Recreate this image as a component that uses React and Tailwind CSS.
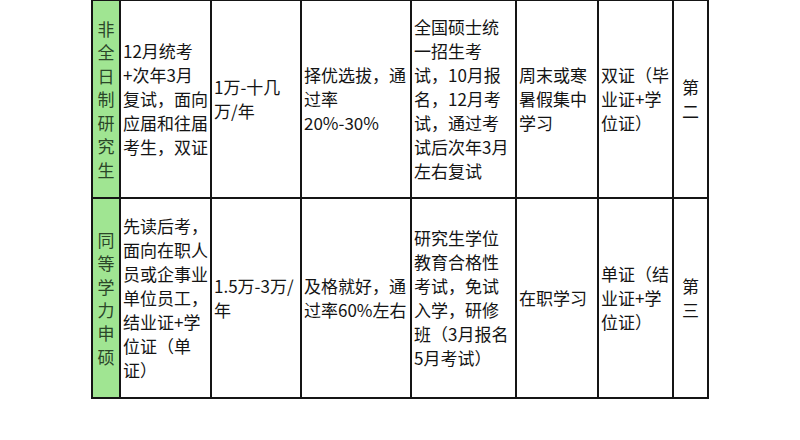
import React from 'react';

/**
 * 非全日制研究生 vs 同等学力申硕 comparison table (cropped)
 */
const rows = [
  {
    head: '非全日制研究生',
    cells: [
      ['12月统考', '+次年3月', '复试，面向', '应届和往届', '考生，双证'],
      ['1万-十几', '万/年'],
      ['择优选拔，通', '过率', '20%-30%'],
      ['全国硕士统', '一招生考', '试，10月报', '名，12月考', '试，通过考', '试后次年3月', '左右复试'],
      ['周末或寒', '暑假集中', '学习'],
      ['双证（毕', '业证+学', '位证）'],
    ],
    rank: ['第', '二'],
    height: 'h-[196px]',
  },
  {
    head: '同等学力申硕',
    cells: [
      ['先读后考，', '面向在职人', '员或企事业', '单位员工，', '结业证+学', '位证（单', '证）'],
      ['1.5万-3万/', '年'],
      ['及格就好，通', '过率60%左右'],
      ['研究生学位', '教育合格性', '考试，免试', '入学，研修', '班（3月报名', '5月考试）'],
      ['在职学习'],
      ['单证（结', '业证+学', '位证）'],
    ],
    rank: ['第', '三'],
    height: 'h-[198px]',
  },
];

function Cell({ lines }) {
  return (
    <div className="bg-white flex flex-col justify-center pl-[2px] text-[17px] leading-[24px] text-[#141414] whitespace-nowrap overflow-hidden">
      {lines.map((line, i) => (
        <span key={i}>{line}</span>
      ))}
    </div>
  );
}

export default function App() {
  return (
    <div
      className="w-[800px] h-[440px] bg-white overflow-hidden"
      style={{ fontFamily: '"Noto Sans CJK SC", "Noto Sans", sans-serif' }}
    >
      <div className="ml-[91px] w-[618px] bg-[#151515] pt-[1px] pb-[2px] px-[2px]">
        {rows.map((row, idx) => (
          <div
            key={row.head}
            className={`grid grid-cols-[26px_89px_88px_108px_103px_80px_73px_33px] gap-x-[2px] ${row.height} ${idx > 0 ? 'mt-[2px]' : ''}`}
          >
            {/* Category */}
            <div className="bg-[#a0e592] flex flex-col items-center justify-center text-[17px] leading-[23.4px] text-[#2b4629]">
              {row.head.split('').map((ch, i) => (
                <span key={i}>{ch}</span>
              ))}
            </div>

            {row.cells.map((lines, i) => (
              <Cell key={i} lines={lines} />
            ))}

            {/* Rank */}
            <div className="bg-white flex flex-col items-center justify-center text-[17px] leading-[24px] text-[#141414]">
              {row.rank.map((ch, i) => (
                <span key={i}>{ch}</span>
              ))}
            </div>
          </div>
        ))}
      </div>
    </div>
  );
}
